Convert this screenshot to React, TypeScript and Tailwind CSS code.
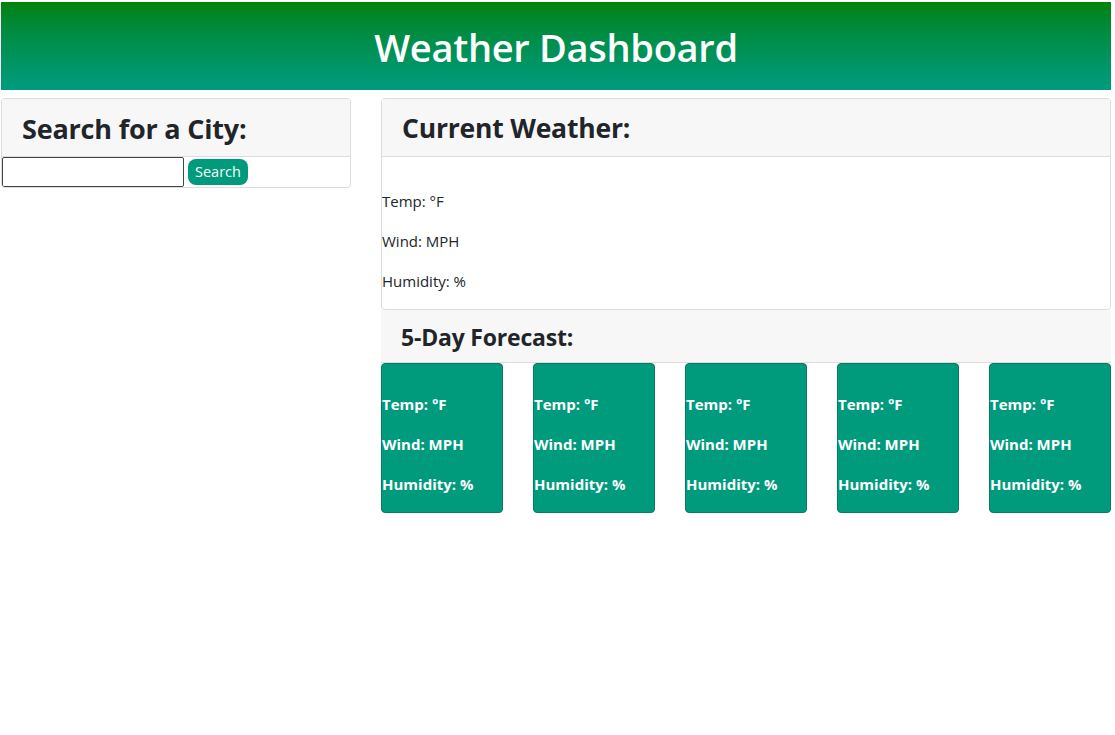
import React from "react";

const days = [1, 2, 3, 4, 5];

function ForecastCard() {
  return (
    <div className="w-[122px] h-[150px] bg-[#009a7c] border border-[#0b7a63] rounded-[4px] text-white font-bold pt-[28px]">
      <p className="leading-6 mb-4">Temp: °F</p>
      <p className="leading-6 mb-4">Wind: MPH</p>
      <p className="leading-6">Humidity: %</p>
    </div>
  );
}

export default function App() {
  return (
    <div className="min-h-[735px] bg-white text-[#212529] text-[16px] font-['Open_Sans','Noto_Sans',sans-serif]">
      {/* header */}
      <div className="pt-[2px] pl-[1px] pr-[4px]">
        <header className="h-[88px] flex items-center justify-center bg-gradient-to-b from-[#048203] to-[#009c7f]">
          <h1 className="text-white text-[38px] font-semibold tracking-[-0.3px] mt-[2px]">
            Weather Dashboard
          </h1>
        </header>
      </div>

      <div className="flex pl-[1px] pr-[4px] mt-[8px] gap-[30px] items-start">
        {/* search */}
        <div className="w-[350px] border border-[#dcdcdc] rounded-[4px] overflow-hidden">
          <div className="h-[58px] bg-[#f7f7f7] border-b border-[#dcdcdc] flex items-center px-[20px]">
            <h2 className="text-[27px] font-bold tracking-[-0.2px] mt-[3px]">Search for a City:</h2>
          </div>
          <div className="flex items-center h-[30px] gap-[4px]">
            <input
              type="text"
              className="w-[182px] h-[30px] border border-[#444] rounded-[2px] bg-white"
            />
            <button className="h-[26px] px-[7px] bg-[#009a7c] text-white text-[14.5px] rounded-[8px] leading-none">
              Search
            </button>
          </div>
        </div>

        {/* current + forecast */}
        <div className="flex-1">
          <div className="border border-[#dcdcdc] rounded-[4px] overflow-hidden">
            <div className="h-[58px] bg-[#f7f7f7] border-b border-[#dcdcdc] flex items-center px-[20px]">
              <h2 className="text-[26.5px] font-bold tracking-[-0.2px] mt-[3px]">Current Weather:</h2>
            </div>
            <div className="pt-[32px] text-[15px]">
              <p className="leading-6 mb-4">Temp: °F</p>
              <p className="leading-6 mb-4">Wind: MPH</p>
              <p className="leading-6 mb-4">Humidity: %</p>
            </div>
          </div>

          <div className="h-[53px] bg-[#f7f7f7] border-b border-[#dcdcdc] flex items-center px-[20px]">
            <h3 className="text-[23px] font-bold tracking-[-0.2px] mt-[2px]">5-Day Forecast:</h3>
          </div>

          <div className="flex justify-between text-[15px]">
            {days.map((d) => (
              <ForecastCard key={d} />
            ))}
          </div>
        </div>
      </div>
    </div>
  );
}
